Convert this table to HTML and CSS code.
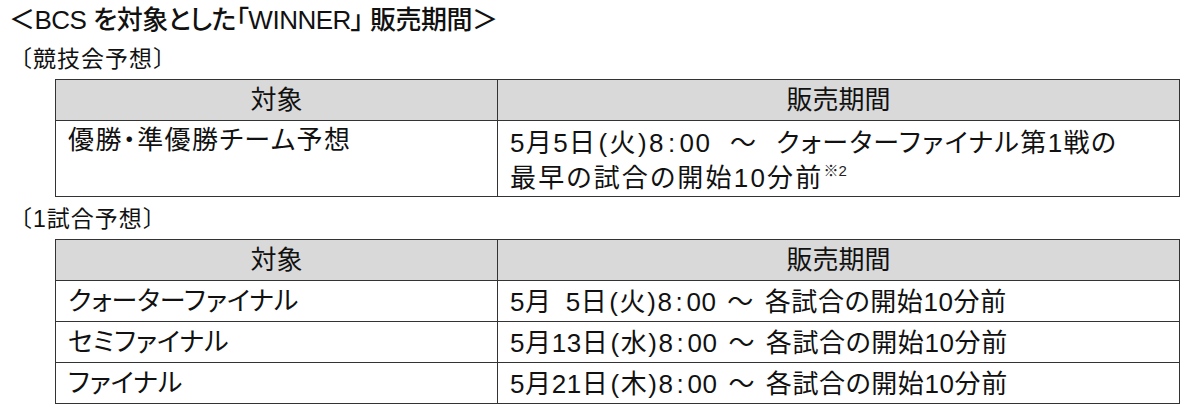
FILE: index.html
```html
<!DOCTYPE html>
<html lang="ja">
<head>
<meta charset="utf-8">
<link rel="stylesheet" href="styles.css">
</head>
<body>
<div class="page">
  <h1 class="title">＜BCS を対象とした「WINNER」 販売期間＞</h1>
  <h2 class="sub">〔競技会予想〕</h2>
  <table class="tbl">
    <colgroup><col class="c1"><col class="c2"></colgroup>
    <tr class="head"><th>対象</th><th>販売期間</th></tr>
    <tr class="tall"><td>優勝・準優勝チーム予想</td><td>5月5日<span class="pl">(</span>火<span class="pr">)</span>8<span class="col">:</span>00 <span class="til">～</span> クォーターファイナル第1戦の<br><span class="wide">最早の試合の開始10分前</span><sup>※2</sup></td></tr>
  </table>
  <h2 class="sub sub2">〔1試合予想〕</h2>
  <table class="tbl">
    <colgroup><col class="c1"><col class="c2"></colgroup>
    <tr class="head"><th>対象</th><th>販売期間</th></tr>
    <tr class="row"><td class="k">クォーターファイナル</td><td>5月<span class="gap"></span>5日<span class="pl">(</span>火<span class="pr">)</span>8<span class="col">:</span>00 <span class="til">～</span> 各試合の開始10分前</td></tr>
    <tr class="row"><td class="k">セミファイナル</td><td>5月13日<span class="pl">(</span>水<span class="pr">)</span>8<span class="col">:</span>00 <span class="til">～</span> 各試合の開始10分前</td></tr>
    <tr class="row"><td class="k">ファイナル</td><td>5月21日<span class="pl">(</span>木<span class="pr">)</span>8<span class="col">:</span>00 <span class="til">～</span> 各試合の開始10分前</td></tr>
  </table>
</div>
</body>
</html>
```

FILE: styles.css
```css
html, body {
  margin: 0;
  padding: 0;
  background: #fff;
}
body {
  font-family: "Liberation Sans", "Noto Sans CJK JP", sans-serif;
  color: #111;
  font-feature-settings: "palt";
}
.page {
  padding: 3px 0 0 9px;
}
.title {
  margin: 0;
  font-size: 26px;
  font-weight: 500;
  line-height: 34px;
  letter-spacing: -0.5px;
}
.sub {
  margin: 6px 0 0 0;
  font-size: 23px;
  font-weight: 400;
  line-height: 32px;
  letter-spacing: 1px;
  font-feature-settings: normal;
}
.sub2 {
  margin-top: 6px;
}
.tbl {
  border-collapse: collapse;
  margin: 4px 0 0 46px;
  width: 1124px;
  table-layout: fixed;
  font-size: 26px;
}
.c1 { width: 442px; }
.c2 { width: 682px; }
.tbl th, .tbl td {
  border: 1.5px solid #333;
  padding: 0 12px;
  height: 40px;
  line-height: 35px;
  font-weight: 400;
  vertical-align: middle;
  text-align: left;
  letter-spacing: 1px;
}
.tbl th {
  background: #d9d9d9;
  text-align: center;
  letter-spacing: 0;
}
.tbl td.k {
  letter-spacing: 0;
}
.tall td {
  height: 71px;
  vertical-align: top;
  padding-top: 2px;
  letter-spacing: 1.4px;
  word-spacing: 10px;
}
.row td {
  letter-spacing: 0.6px;
  word-spacing: 3px;
}
.wide {
  letter-spacing: 2.2px;
}
.tbl sup {
  font-size: 15px;
  line-height: 0;
  vertical-align: 11px;
  letter-spacing: 0;
  color: #222;
}
.pl { padding-left: 2px; padding-right: 1px; }
.pr { padding-right: 1px; padding-left: 1px; }
.col { padding: 0 3px; }
.gap { display: inline-block; width: 14px; }
.til { font-family: "Noto Sans CJK JP", sans-serif; }
```
